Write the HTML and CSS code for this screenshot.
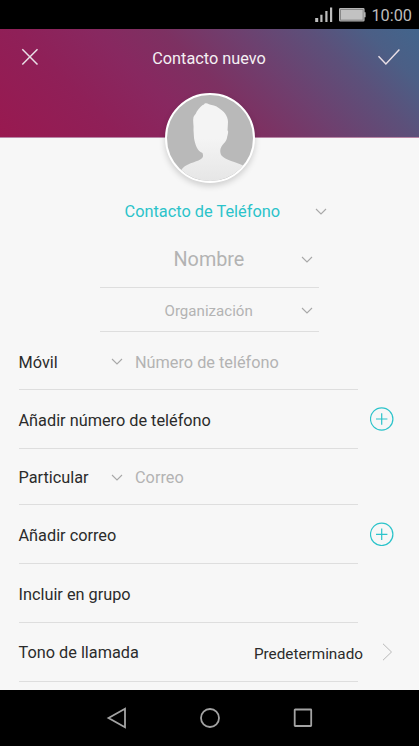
FILE: index.html
```html
<!DOCTYPE html>
<html lang="es">
<head>
<meta charset="utf-8">
<title>Contacto nuevo</title>
<link rel="stylesheet" href="styles.css">
</head>
<body>
<div class="status">
  <svg class="signal" width="18" height="15" viewBox="0 0 18 15"><path d="M.2 11h3v4h-3zM5.3 7.7h2.2V15H5.3zM10.3 4h2.2v11h-2.2zM15 .5h2.2V15H15z" fill="#bdbdbd"/></svg>
  <svg class="battery" width="27" height="14" viewBox="0 0 27 14"><rect x=".6" y=".6" width="24.4" height="12.4" rx=".8" fill="#777" stroke="#b5b5b5" stroke-width="1.2"/><rect x="1.9" y="1.9" width="21.8" height="9.8" fill="#c2c2c2"/><path d="M25 4.3h1.6v5H25z" fill="#b5b5b5"/></svg>
  <span class="time">10:00</span>
</div>
<header class="header">
  <svg class="close" width="18" height="18" viewBox="0 0 18 18"><path d="M1.3 1.3l15.2 15.2M16.5 1.3L1.3 16.5"/></svg>
  <h1 class="title">Contacto nuevo</h1>
  <svg class="check" width="24" height="18" viewBox="0 0 24 18"><path d="M1.5 8.3l7.4 7.6L22.4 1.5"/></svg>
  <div class="avatar">
    <svg width="86" height="86" viewBox="0 0 86 86">
      <defs><linearGradient id="person" x1="0" y1="0" x2="0" y2="1"><stop offset=".45" stop-color="#f4f4f4"/><stop offset="1" stop-color="#e6e6e6"/></linearGradient></defs>
      <path fill="url(#person)" d="M37 9.5C38 7.8 40 8.3 42 9.2C44 10.2 47 9.5 51 12.5C57 16 61 21 61 27L60.5 35.5C62 36 60.5 40 60 43C59.5 46 57 48 55.5 50C53 53 52.5 57 54.5 60.5C58 65 69 67 77 71L86 86H8L14 77C15 69 28 68 34 64C37 62 36 60 35.5 58C30 56 28 49 27 43L26.5 35C27 30 25.5 26 26.5 22C28 19 29 19 29.5 17C32 13 35 10 37 9.5Z"/>
    </svg>
  </div>
</header>
<main class="form">
  <div class="account"><span class="account-name">Contacto de Teléfono</span><svg class="chevron" width="12" height="8" viewBox="0 0 12 8"><path d="M1 1l5 5 5-5"/></svg></div>
  <div class="field name"><span class="hint">Nombre</span><svg class="chevron" width="12" height="8" viewBox="0 0 12 8"><path d="M1 1l5 5 5-5"/></svg></div>
  <div class="field org"><span class="hint">Organización</span><svg class="chevron" width="12" height="8" viewBox="0 0 12 8"><path d="M1 1l5 5 5-5"/></svg></div>
  <div class="row phone"><div class="cell"><span class="type">Móvil</span><svg class="chevron" width="12" height="8" viewBox="0 0 12 8"><path d="M1 1l5 5 5-5"/></svg><span class="value">Número de teléfono</span></div></div>
  <div class="row"><div class="cell"><span class="label">Añadir número de teléfono</span></div><svg class="plus" width="24" height="24" viewBox="0 0 24 24"><circle cx="11.7" cy="12" r="11.2"/><path d="M6 12h11.4M11.7 6.3v11.4"/></svg></div>
  <div class="row mail"><div class="cell"><span class="type">Particular</span><svg class="chevron" width="12" height="8" viewBox="0 0 12 8"><path d="M1 1l5 5 5-5"/></svg><span class="value">Correo</span></div></div>
  <div class="row"><div class="cell"><span class="label">Añadir correo</span></div><svg class="plus" width="24" height="24" viewBox="0 0 24 24"><circle cx="11.7" cy="12.3" r="11.2"/><path d="M6 12.3h11.4M11.7 6.6v11.4"/></svg></div>
  <div class="row"><div class="cell"><span class="label">Incluir en grupo</span></div></div>
  <div class="row ring"><div class="cell"><span class="label">Tono de llamada</span><span class="tone">Predeterminado</span></div><svg class="next" width="11" height="18" viewBox="0 0 11 18"><path d="M1 .8l8.5 8.2L1 17.2"/></svg></div>
</main>
<nav class="nav">
  <svg width="20" height="22" viewBox="0 0 20 22"><path d="M2.5 11L19 1.7v18.6z"/></svg>
  <svg width="22" height="22" viewBox="0 0 22 22"><circle cx="11" cy="11" r="9"/></svg>
  <svg width="20" height="20" viewBox="0 0 20 20"><rect x="1.7" y="1.5" width="16.5" height="16.5" rx=".5"/></svg>
</nav>
</body>
</html>
```
FILE: styles.css
```css
* { box-sizing: border-box; }
body {
  margin: 0;
  width: 419px;
  height: 746px;
  overflow: hidden;
  display: flex;
  flex-direction: column;
  background: #f7f7f7;
  color: #2b2b2b;
  font: 16.3px/20px Roboto, sans-serif;
}
svg { display: block; flex: none; }
.status {
  height: 29px;
  flex: none;
  display: flex;
  justify-content: flex-end;
  align-items: flex-start;
  padding: 7px 7px 0 0;
  background: #000;
}
.battery { margin: 1px 5px 0 6px; }
.time { color: #bdbdbd; font-size: 16.3px; line-height: 17px; }
.header {
  position: relative;
  height: 109px;
  flex: none;
  display: flex;
  justify-content: space-between;
  align-items: flex-start;
  padding: 19px 18px 0 21px;
  background: linear-gradient(45deg, #991950 0%, #8f2058 23%, #882860 38%, #7d3162 51%, #6f3f6e 64%, #5c507a 79%, #4b5f86 90%, #42658c 100%);
  border-bottom: 1px solid #b886a6;
}
.close, .check { fill: none; stroke: #e9dfe6; stroke-width: 1.5; }
.title {
  margin: 0 0 0 2px;
  color: #f4f0f3;
  font-size: 16.3px;
  line-height: 21px;
  font-weight: 400;
}
.avatar {
  position: absolute;
  left: 165px;
  top: 63.5px;
  width: 90px;
  height: 90px;
  border: 2px solid #fff;
  border-radius: 50%;
  overflow: hidden;
  background: #b9b9b9;
  box-shadow: 0 3px 6px rgba(0, 0, 0, .17);
}
.form { height: 552px; flex: none; }
.chevron { fill: none; stroke: #a8a8a8; stroke-width: 1.1; }
.account {
  height: 92px;
  padding: 64px 92px 0 124.5px;
  display: flex;
  justify-content: space-between;
}
.account .chevron { margin-top: 6px; }
.account-name { color: #2bc3ca; font-size: 16.35px; line-height: 20px; }
.field {
  width: 219px;
  margin-left: 100px;
  display: flex;
  justify-content: space-between;
  align-items: center;
  padding: 2px 6px 0 0;
  border-bottom: 1px solid #dedede;
  color: #b3b3b3;
}
.name { height: 58px; padding-left: 73.5px; }
.name .hint { font-size: 19.8px; padding-top: 1px; }
.org { height: 44px; padding-left: 64.5px; }
.org .hint { font-size: 15.1px; }
.row { display: flex; height: 59px; padding: 0 25px 0 18.5px; justify-content: space-between; }
.cell {
  width: 339.5px;
  display: flex;
  align-items: center;
  padding-top: 3px;
  white-space: nowrap;
  border-bottom: 1px solid #dedede;
}
.phone { height: 58px; }
.phone .cell { padding-top: 4px; }
.mail { height: 56px; }
.type { width: 92.5px; }
.cell .chevron { margin-bottom: 1px; }
.value { color: #b3b3b3; margin-left: 12px; }
.plus { fill: none; stroke: #2bc3ca; stroke-width: 1.2; margin-top: 17px; }
.ring .cell { padding-top: 1px; }
.tone { font-size: 15.3px; margin-left: auto; margin-right: -5px; padding-top: 2px; }
.next { margin: 20px 1px 0 0; fill: none; stroke: #b8b8b8; stroke-width: 1; }
.nav {
  height: 56px;
  flex: none;
  background: #000;
  display: flex;
  justify-content: space-between;
  align-items: center;
  padding: 0 106px;
}
.nav svg { fill: none; stroke: #a3a3a3; stroke-width: 1.8; }
```
